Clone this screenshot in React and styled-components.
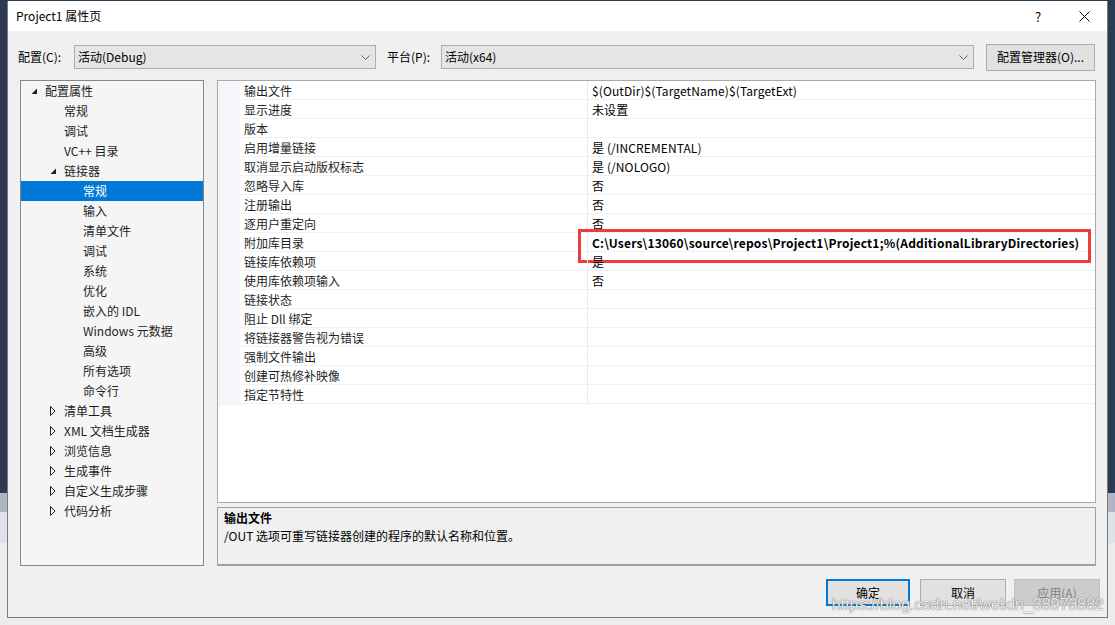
import React from 'react';
import styled, { createGlobalStyle } from 'styled-components';

const GlobalStyle = createGlobalStyle`
  html, body {
    margin: 0;
    padding: 0;
  }
  body {
    font-family: "Noto Sans CJK SC", "Noto Sans", sans-serif;
    font-size: 12px;
    color: #1e1e1e;
  }
`;

const Screen = styled.div`
  position: relative;
  width: 1115px;
  height: 625px;
  overflow: hidden;
  box-sizing: border-box;
  padding: 1px 0 0 7px;
  background: linear-gradient(
    to bottom,
    #2c3a54 0,
    #2c3a54 493px,
    #aeb5c3 493px,
    #aeb5c3 512px,
    #dfe2e8 512px,
    #dfe2e8 543px,
    #ececec 543px
  );
`;

const Dialog = styled.div`
  position: relative;
  width: 1101px;
  height: 617px;
  box-sizing: border-box;
  background: #f0f0f0;
  border: 1px solid #7a7a7a;
  border-top: none;
  display: flex;
  flex-direction: column;
`;

const TitleBar = styled.div`
  height: 30px;
  background: #fff;
  display: flex;
  align-items: center;
  padding-left: 8px;
  flex-shrink: 0;
`;

const Title = styled.div`
  flex: 1;
  font-size: 12px;
  line-height: 16px;
  color: #000;
`;

const TitleButton = styled.div`
  width: 46px;
  height: 30px;
  display: flex;
  align-items: center;
  justify-content: center;
  color: #000;
  font-size: 13px;
`;

const Toolbar = styled.div`
  height: 49px;
  display: flex;
  align-items: center;
  padding: 3px 12px 0 10px;
  box-sizing: border-box;
  flex-shrink: 0;
`;

const FieldLabel = styled.div`
  width: ${(p) => p.$width}px;
  flex-shrink: 0;
  line-height: 16px;
  color: #000;
`;

const Combo = styled.div`
  height: 24px;
  box-sizing: border-box;
  width: ${(p) => (p.$width ? `${p.$width}px` : 'auto')};
  flex: ${(p) => (p.$width ? '0 0 auto' : '1')};
  background: #e5e5e5;
  border: 1px solid #adadad;
  display: flex;
  align-items: center;
  padding: 0 5px 0 3px;
  margin-right: ${(p) => p.$gap || 0}px;
  color: #000;
`;

const ComboText = styled.span`
  flex: 1;
  line-height: 16px;
`;

const Button = styled.div`
  width: ${(p) => p.$width || 86}px;
  height: 27px;
  box-sizing: border-box;
  flex-shrink: 0;
  display: flex;
  align-items: center;
  justify-content: center;
  margin-left: ${(p) => p.$gap || 0}px;
  background: ${(p) => (p.$disabled ? '#cccccc' : '#e1e1e1')};
  border: ${(p) => (p.$primary ? '2px solid #0078d7' : p.$disabled ? '1px solid #bfbfbf' : '1px solid #adadad')};
  color: ${(p) => (p.$disabled ? '#838383' : '#000')};
  line-height: 16px;
`;

const Main = styled.div`
  height: 486px;
  display: flex;
  gap: 13px;
  padding: 0 11px 0 12px;
  flex-shrink: 0;
`;

const Tree = styled.div`
  width: 184px;
  box-sizing: border-box;
  background: #f5f5f5;
  border: 1px solid #828790;
`;

const TreeRow = styled.div`
  height: 20px;
  display: flex;
  align-items: center;
  padding-left: ${(p) => p.$level * 19 + 8}px;
  background: ${(p) => (p.$selected ? '#0078d7' : 'transparent')};
  color: ${(p) => (p.$selected ? '#fff' : '#1e1e1e')};
  line-height: 16px;
  white-space: nowrap;
`;

const Expander = styled.span`
  width: 16px;
  height: 20px;
  flex-shrink: 0;
  display: flex;
  align-items: center;
`;

const RightColumn = styled.div`
  flex: 1;
  display: flex;
  flex-direction: column;
  gap: 4px;
`;

const Grid = styled.div`
  flex: 1;
  background: #fff;
  border: 1px solid #a9a9a9;
`;

const GridRow = styled.div`
  position: relative;
  height: 19px;
  box-sizing: border-box;
  display: grid;
  grid-template-columns: 22px 348px 1fr;
  border-bottom: 1px solid #eff1f7;
`;

const Gutter = styled.div`
  background: #f4f6fb;
  margin-bottom: -1px;
`;

const NameCell = styled.div`
  padding-left: 4px;
  line-height: 20px;
  border-right: 1px solid #e8eaf2;
  white-space: nowrap;
`;

const ValueCell = styled.div`
  position: relative;
  padding-left: 4px;
  line-height: 20px;
  white-space: nowrap;
  font-weight: ${(p) => (p.$bold ? 700 : 400)};
  letter-spacing: ${(p) => (p.$bold ? '0.2px' : '0.1px')};
  color: #000;
`;

const Highlight = styled.div`
  position: absolute;
  left: -10px;
  right: 4px;
  top: -4px;
  bottom: -10px;
  border: 3px solid #ee3b3b;
  pointer-events: none;
`;

const Description = styled.div`
  height: 59px;
  box-sizing: border-box;
  background: #f0f0f0;
  border: 1px solid #a0a0a0;
  border-bottom: 2px solid #a0a0a0;
  padding: 1px 6px;
  color: #000;
`;

const DescTitle = styled.div`
  font-weight: 700;
  line-height: 18px;
`;

const DescText = styled.div`
  line-height: 18px;
`;

const Footer = styled.div`
  flex: 1;
  display: flex;
  justify-content: flex-end;
  align-items: flex-start;
  padding: 13px 7px 0 0;
`;

const Watermark = styled.div`
  position: absolute;
  right: 3px;
  bottom: 3px;
  font-family: "Liberation Sans", Arial, sans-serif;
  font-size: 16px;
  color: rgba(255, 255, 255, 0.9);
  text-shadow: 0 0 1px rgba(90, 90, 90, 0.8), 0 0 1px rgba(90, 90, 90, 0.8);
  pointer-events: none;
`;

const Chevron = () => (
  <svg width="9" height="5" viewBox="0 0 9 5">
    <polyline points="0.5,0.5 4.5,4.5 8.5,0.5" fill="none" stroke="#606060" strokeWidth="1" />
  </svg>
);

const CloseIcon = () => (
  <svg width="11" height="11" viewBox="0 0 11 11">
    <path d="M0.5 0.5 L10.5 10.5 M10.5 0.5 L0.5 10.5" stroke="#000" strokeWidth="1" />
  </svg>
);

const OpenArrow = () => (
  <svg width="7" height="7" viewBox="0 0 7 7" style={{ marginLeft: 2 }}>
    <polygon points="6,0.5 6,6 0.5,6" fill="#1e1e1e" />
  </svg>
);

const ClosedArrow = () => (
  <svg width="6" height="10" viewBox="0 0 6 10" style={{ marginLeft: 2 }}>
    <polygon points="0.5,0.5 5,5 0.5,9.5" fill="none" stroke="#1e1e1e" strokeWidth="1" />
  </svg>
);

const treeItems = [
  { label: '配置属性', level: 0, state: 'open' },
  { label: '常规', level: 1 },
  { label: '调试', level: 1 },
  { label: 'VC++ 目录', level: 1 },
  { label: '链接器', level: 1, state: 'open' },
  { label: '常规', level: 2, selected: true },
  { label: '输入', level: 2 },
  { label: '清单文件', level: 2 },
  { label: '调试', level: 2 },
  { label: '系统', level: 2 },
  { label: '优化', level: 2 },
  { label: '嵌入的 IDL', level: 2 },
  { label: 'Windows 元数据', level: 2 },
  { label: '高级', level: 2 },
  { label: '所有选项', level: 2 },
  { label: '命令行', level: 2 },
  { label: '清单工具', level: 1, state: 'closed' },
  { label: 'XML 文档生成器', level: 1, state: 'closed' },
  { label: '浏览信息', level: 1, state: 'closed' },
  { label: '生成事件', level: 1, state: 'closed' },
  { label: '自定义生成步骤', level: 1, state: 'closed' },
  { label: '代码分析', level: 1, state: 'closed' },
];

const properties = [
  ['输出文件', '$(OutDir)$(TargetName)$(TargetExt)'],
  ['显示进度', '未设置'],
  ['版本', ''],
  ['启用增量链接', '是 (/INCREMENTAL)'],
  ['取消显示启动版权标志', '是 (/NOLOGO)'],
  ['忽略导入库', '否'],
  ['注册输出', '否'],
  ['逐用户重定向', '否'],
  ['附加库目录', 'C:\\Users\\13060\\source\\repos\\Project1\\Project1;%(AdditionalLibraryDirectories)', true],
  ['链接库依赖项', '是'],
  ['使用库依赖项输入', '否'],
  ['链接状态', ''],
  ['阻止 Dll 绑定', ''],
  ['将链接器警告视为错误', ''],
  ['强制文件输出', ''],
  ['创建可热修补映像', ''],
  ['指定节特性', ''],
];

export default function App() {
  return (
    <Screen>
      <GlobalStyle />
      <Dialog>
        <TitleBar>
          <Title>Project1 属性页</Title>
          <TitleButton>?</TitleButton>
          <TitleButton>
            <CloseIcon />
          </TitleButton>
        </TitleBar>

        <Toolbar>
          <FieldLabel $width={56}>配置(C):</FieldLabel>
          <Combo $width={302} $gap={11}>
            <ComboText>活动(Debug)</ComboText>
            <Chevron />
          </Combo>
          <FieldLabel $width={54}>平台(P):</FieldLabel>
          <Combo $gap={12}>
            <ComboText>活动(x64)</ComboText>
            <Chevron />
          </Combo>
          <Button $width={109}>配置管理器(O)...</Button>
        </Toolbar>

        <Main>
          <Tree>
            {treeItems.map((item, i) => (
              <TreeRow key={i} $level={item.level} $selected={item.selected}>
                <Expander>
                  {item.state === 'open' && <OpenArrow />}
                  {item.state === 'closed' && <ClosedArrow />}
                </Expander>
                {item.label}
              </TreeRow>
            ))}
          </Tree>

          <RightColumn>
            <Grid>
              {properties.map(([name, value, bold], i) => (
                <GridRow key={i}>
                  <Gutter />
                  <NameCell>{name}</NameCell>
                  <ValueCell $bold={bold}>
                    {value}
                    {bold && <Highlight />}
                  </ValueCell>
                </GridRow>
              ))}
            </Grid>
            <Description>
              <DescTitle>输出文件</DescTitle>
              <DescText>/OUT 选项可重写链接器创建的程序的默认名称和位置。</DescText>
            </Description>
          </RightColumn>
        </Main>

        <Footer>
          <Button $primary $width={84}>确定</Button>
          <Button $gap={10}>取消</Button>
          <Button $disabled $gap={8}>应用(A)</Button>
        </Footer>

        <Watermark>https://blog.csdn.net/weixin_38973882</Watermark>
      </Dialog>
    </Screen>
  );
}
